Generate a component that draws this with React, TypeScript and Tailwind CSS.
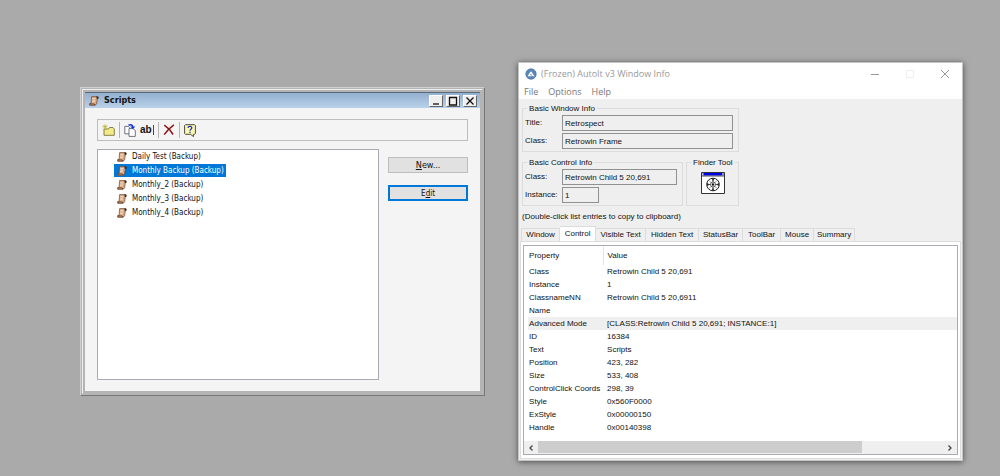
import type { ReactNode } from "react";

const scripts = [
  "Daily Test (Backup)",
  "Monthly Backup (Backup)",
  "Monthly_2 (Backup)",
  "Monthly_3 (Backup)",
  "Monthly_4 (Backup)",
];

const tabs = [
  { label: "Window", width: "w-[39px]" },
  { label: "Control", width: "w-[36px]" },
  { label: "Visible Text", width: "w-[50px]" },
  { label: "Hidden Text", width: "w-[53px]" },
  { label: "StatusBar", width: "w-[44px]" },
  { label: "ToolBar", width: "w-[38px]" },
  { label: "Mouse", width: "w-[33px]" },
  { label: "Summary", width: "w-[41px]" },
];

const properties: [string, string][] = [
  ["Class", "Retrowin Child 5 20,691"],
  ["Instance", "1"],
  ["ClassnameNN", "Retrowin Child 5 20,6911"],
  ["Name", ""],
  ["Advanced Mode", "[CLASS:Retrowin Child 5 20,691; INSTANCE:1]"],
  ["ID", "16384"],
  ["Text", "Scripts"],
  ["Position", "423, 282"],
  ["Size", "533, 408"],
  ["ControlClick Coords", "298, 39"],
  ["Style", "0x560F0000"],
  ["ExStyle", "0x00000150"],
  ["Handle", "0x00140398"],
];

function ScrollIcon() {
  return (
    <svg viewBox="0 0 10 10" className="size-[10px] shrink-0" aria-hidden="true">
      <path d="M2.600.6h6L7.600 7.800 6 9.400H.8L.5 7.800l1.600-.5z" fill="#d9a982" stroke="#6e4630" strokeWidth=".7" />
      <path d="M7.200.5h1.800l.8 1.100-.6 1.500H7.900z" fill="#3f2a24" />
      <path d="M3.400 2.500h3M3.200 4.100h2.900M3 5.700h2.800" stroke="#f9e2c9" strokeWidth=".8" />
      <path d="M.6 8h4.700l.9 1.100" fill="none" stroke="#513222" strokeWidth=".9" />
    </svg>
  );
}

function NewFolderIcon() {
  return (
    <svg viewBox="0 0 13 12" className="h-3 w-[13px]" aria-hidden="true">
      <path d="M2 5h4.500l1-1.500h3.500l1.300 1.500v6.300H2z" fill="#f3ec86" stroke="#77743c" strokeWidth=".9" />
      <path d="M3 .3v4.800M.5 2.700h5M1.200.9l3.600 3.600M4.800.9 1.200 4.500" stroke="#b9b51f" strokeWidth=".7" />
    </svg>
  );
}

function DuplicateIcon() {
  return (
    <svg viewBox="0 0 12 13" className="h-[13px] w-3" aria-hidden="true">
      <path d="M.8 2.400h3.400l1.500 1.400v6H.8z" fill="#fff" stroke="#4b5361" strokeWidth=".8" />
      <path d="M5 4.600h4l2.300 1.800v6H5z" fill="#fff" stroke="#4b5361" strokeWidth=".8" />
      <path d="M4.500 1.300C7 .3 8.600 1 8.800 3" fill="none" stroke="#1733dd" strokeWidth="1.500" />
      <path d="M6.300 2.500h5L8.800 5.200z" fill="#1733dd" />
    </svg>
  );
}

function DeleteIcon() {
  return (
    <svg viewBox="0 0 12 12" className="size-3" aria-hidden="true">
      <path d="M1.300 1.200c3 2 6.500 5.500 8.800 9.300M10.900.9C6.500 4 3.700 7 1.200 10.700" fill="none" stroke="#8e1418" strokeWidth="1.500" />
    </svg>
  );
}

function HelpIcon() {
  return (
    <svg viewBox="0 0 12 13" className="h-[13px] w-3" aria-hidden="true">
      <path d="M1.400.7h9.200l.8.8v8l-.8.8H9.400v2.300L6.600 10.300H1.400l-.8-.8v-8z" fill="#fbf8b4" stroke="#4c4c3c" strokeWidth="1" />
      <path d="M4 3.900C4.100 1.700 8 1.800 7.800 4 7.700 5.200 6 5.200 6 6.700M6 7.700v1.300" fill="none" stroke="#2633b5" strokeWidth="1.300" />
    </svg>
  );
}

function FinderIcon() {
  return (
    <svg viewBox="0 0 24 22" className="h-[22px] w-6" aria-hidden="true">
      <path d="M.5.500h23v21H.500z" fill="#fff" stroke="#333" />
      <path d="M1 1h22v2.500H1z" fill="#0000e8" />
      <path d="M0 4h24" stroke="#222" strokeWidth=".8" />
      <path d="M1.800 1v2.500M22 1v2.500" stroke="#bbb" strokeWidth="1.500" />
      <circle cx="12" cy="12.500" r="6.300" fill="#fff" stroke="#222" strokeWidth="1" />
      <path d="M10.800 6.500 12 8.500l1.200-2M10.800 18.500l1.200-2 1.200 2M6 11.300l2 1.200-2 1.200M18 11.300l-2 1.200 2 1.200" fill="#222" stroke="#222" strokeWidth=".7" />
      <path d="M12 8v9M7.500 12.500h9" stroke="#222" strokeWidth=".8" />
      <path d="m8 8.500 8 8M16 8.500l-8 8" stroke="#777" strokeWidth=".7" />
      <circle cx="12" cy="12.500" r="2.500" fill="#fff" stroke="#333" strokeWidth=".8" />
      <circle cx="12" cy="12.500" r="1.200" fill="#111" />
    </svg>
  );
}

function AutoItIcon() {
  return (
    <svg viewBox="0 0 12 12" className="size-3" aria-hidden="true">
      <circle cx="6" cy="6" r="5.200" fill="#5b87b9" stroke="#426d9e" strokeWidth=".7" />
      <path d="M2.600 8.200 5.300 4q.7-.9 1.400 0l2.700 4.200H7.700L6 5.700 4.900 7.300h1.500l.6.9z" fill="#fff" />
    </svg>
  );
}

function ToolButton({ label, children }: { label: string; children: ReactNode }) {
  return (
    <button type="button" aria-label={label} className="flex h-4 items-center justify-center">
      {children}
    </button>
  );
}

function Divider() {
  return <span className="h-4 w-px bg-[#b4b4b4]" />;
}

function CaptionButton({ label, path }: { label: string; path: string }) {
  return (
    <button
      type="button"
      aria-label={label}
      className="flex h-3 w-[14px] items-center justify-center border border-t-white border-r-[#666] border-b-[#666] border-l-white bg-[#efefef]"
    >
      <svg viewBox="0 0 10 10" className="size-[10px]" aria-hidden="true">
        <path d={path} fill="none" stroke="#111" strokeWidth="1.300" />
      </svg>
    </button>
  );
}

function ScriptsWindow() {
  return (
    <section className="mt-[87px] min-w-0 flex-[405] border border-t-[#d0d0d0] border-r-[#777] border-b-[#777] border-l-[#d0d0d0] bg-[#b4b4b4] font-['DejaVu_Sans_Condensed','DejaVu_Sans',sans-serif] text-[8px] text-[#111]">
      <div className="m-px border border-t-[#eee] border-r-[#b4b4b4] border-b-[#b4b4b4] border-l-[#eee] p-[2px]">
        <header className="flex h-4 items-center gap-[5px] border-t border-[#596a7c] bg-linear-to-b from-[#94b0cf] to-[#b9d1ea] pr-[3px] pl-1">
          <ScrollIcon />
          <h1 className="flex-1 text-[9px] font-bold">Scripts</h1>
          <div className="flex gap-[3px]">
            <CaptionButton label="Minimize" path="M2 8h6" />
            <CaptionButton label="Maximize" path="M1 1.500h8M1.500 1v8h7V1" />
            <CaptionButton label="Close" path="m1.500 1.500 7 7m0-7-7 7" />
          </div>
        </header>
        <div className="bg-[#f4f4f4] px-3 pt-[11px] pb-[11px]">
          <div className="flex h-[22px] items-center gap-1 border border-[#bdbdbd] pl-1">
            <ToolButton label="New folder"><NewFolderIcon /></ToolButton>
            <Divider />
            <ToolButton label="Duplicate"><DuplicateIcon /></ToolButton>
            <ToolButton label="Rename">
              <span className="font-['Liberation_Sans',sans-serif] text-[10px] leading-[10px] font-bold">ab</span>
              <span className="ml-px h-[10px] w-px bg-[#2b35ff]" />
            </ToolButton>
            <Divider />
            <ToolButton label="Delete"><DeleteIcon /></ToolButton>
            <Divider />
            <ToolButton label="Help"><HelpIcon /></ToolButton>
          </div>
          <div className="mt-2 flex items-start gap-[9px]">
            <ul role="listbox" aria-label="Scripts" className="flex min-h-[231px] flex-1 flex-col items-start gap-px border border-[#a8abb4] bg-white pl-4">
              {scripts.map((name, i) => (
                <li
                  key={name}
                  role="option"
                  aria-selected={i === 1}
                  className="flex h-[13px] items-center gap-[5px] pr-[2px] pl-[3px] aria-selected:bg-[#0078d7] aria-selected:text-white"
                >
                  <ScrollIcon />
                  <span className="whitespace-nowrap">{name}</span>
                </li>
              ))}
            </ul>
            <div className="flex w-20 flex-col gap-3 pt-2">
              <button type="button" className="h-4 border border-[#bebebe] bg-[#e1e1e1] text-[9px] leading-[13px]">
                <u>N</u>ew...
              </button>
              <button type="button" className="h-4 border border-[#0078d7] bg-[#e1e1e1] leading-[13px] ring-1 ring-[#0078d7] ring-inset">
                E<u>d</u>it
              </button>
            </div>
          </div>
        </div>
      </div>
    </section>
  );
}

function Field({ id, label, value, short }: { id: string; label: string; value: string; short?: boolean }) {
  return (
    <div className="flex h-4 items-center">
      <label htmlFor={id} className="w-[37px] shrink-0">{label}</label>
      <input
        id={id}
        readOnly
        defaultValue={value}
        className={`h-4 min-w-0 border border-[#919191] bg-[#efefef] px-[2px] ${short ? "w-[37px]" : "flex-1"}`}
      />
    </div>
  );
}

function Group({ title, className, children }: { title: string; className: string; children: ReactNode }) {
  return (
    <fieldset className={`min-w-0 border border-[#dcdcdc] pb-[2px] ${className}`}>
      <legend className="ml-1 px-[2px] leading-[11px] whitespace-nowrap">{title}</legend>
      {children}
    </fieldset>
  );
}

function WindowInfo() {
  return (
    <section className="mt-[62px] min-w-0 flex-[445] border border-[#c4c4c4] bg-[#efefef] font-['Liberation_Sans',sans-serif] text-[8px] text-[#111] shadow-[0_1px_6px_rgba(0,0,0,0.55)]">
      <div className="bg-white font-['Open_Sans',sans-serif] text-[9px]">
        <header className="flex h-[22px] items-center gap-1 pr-3 pl-[6px] text-[#999]">
          <AutoItIcon />
          <h1 className="flex-1">(Frozen) AutoIt v3 Window Info</h1>
          <div className="flex gap-[25px]">
            <button type="button" aria-label="Minimize">
              <svg viewBox="0 0 10 10" className="size-[10px]" aria-hidden="true"><path d="M1 5.500h8" stroke="#999" /></svg>
            </button>
            <button type="button" aria-label="Maximize" disabled>
              <svg viewBox="0 0 10 10" className="size-[10px]" aria-hidden="true"><path d="M1.500 1.500h7v7h-7z" fill="none" stroke="#eee" /></svg>
            </button>
            <button type="button" aria-label="Close">
              <svg viewBox="0 0 10 10" className="size-[10px]" aria-hidden="true"><path d="m1 1 8 8m0-8-8 8" stroke="#999" /></svg>
            </button>
          </div>
        </header>
        <nav className="flex h-[14px] items-center gap-[10px] pl-[5px] text-[#777]">
          <button type="button">File</button>
          <button type="button">Options</button>
          <button type="button">Help</button>
        </nav>
      </div>
      <div className="px-px pt-1 pb-px">
        <div className="flex w-[219px] flex-col gap-[5px] pl-[2px]">
          <Group title="Basic Window Info" className="">
            <div className="flex flex-col gap-[2px] pt-px pr-[5px] pl-[2px]">
              <Field id="win-title" label="Title:" value="Retrospect" />
              <Field id="win-class" label="Class:" value="Retrowin Frame" />
            </div>
          </Group>
          <div className="flex gap-[3px]">
            <Group title="Basic Control Info" className="flex-1">
              <div className="flex flex-col gap-[2px] pt-px pr-[5px] pl-[2px]">
                <Field id="ctl-class" label="Class:" value="Retrowin Child 5 20,691" />
                <Field id="ctl-instance" label="Instance:" value="1" short />
              </div>
            </Group>
            <Group title="Finder Tool" className="w-[53px]">
              <button type="button" aria-label="Finder Tool" className="mx-auto mt-1 block">
                <FinderIcon />
              </button>
            </Group>
          </div>
        </div>
        <p className="mt-[5px] pl-[2px] leading-[11px]">(Double-click list entries to copy to clipboard)</p>
        <div role="tablist" className="mt-1 flex h-[15px] items-end pl-px">
          {tabs.map((tab, i) => (
            <button
              key={tab.label}
              type="button"
              role="tab"
              aria-selected={i === 1}
              className={`h-[13px] border border-b-0 border-l-0 border-[#dcdcdc] leading-[12px] whitespace-nowrap first:border-l aria-selected:h-[15px] aria-selected:bg-white ${tab.width}`}
            >
              {tab.label}
            </button>
          ))}
        </div>
        <div role="tabpanel" className="border border-[#dcdcdc] bg-white px-[2px] py-[3px]">
          <div className="border border-[#a8abb4]">
            <div className="pb-[7px] pl-1">
              <table className="w-full table-fixed border-collapse text-left">
                <thead>
                  <tr className="h-[19px]">
                    <th className="w-[75px] border-r border-[#e5e5e5] p-0 pl-px font-normal">Property</th>
                    <th className="p-0 pl-1 font-normal">Value</th>
                  </tr>
                </thead>
                <tbody>
                  {properties.map(([name, value]) => (
                    <tr key={name} className={name === "Advanced Mode" ? "h-[13px] bg-[#efefef]" : "h-[13px]"}>
                      <td className="p-0 pl-px leading-[13px] whitespace-nowrap">{name}</td>
                      <td className="p-0 pl-1 leading-[13px] whitespace-nowrap">{value}</td>
                    </tr>
                  ))}
                </tbody>
              </table>
            </div>
            <div className="flex h-[13px] bg-[#efefef]">
              <button type="button" aria-label="Scroll left" className="flex w-[14px] items-center justify-center">
                <svg viewBox="0 0 6 8" className="h-2 w-[6px]" aria-hidden="true"><path d="M4.500 1.500 2 4l2.500 2.500" fill="none" stroke="#444" strokeWidth="1.300" /></svg>
              </button>
              <div className="flex-1"><div className="h-3 w-4/5 bg-[#cdcdcd]" /></div>
              <button type="button" aria-label="Scroll right" className="flex w-[14px] items-center justify-center">
                <svg viewBox="0 0 6 8" className="h-2 w-[6px]" aria-hidden="true"><path d="M1.500 1.500 4 4 1.500 6.500" fill="none" stroke="#444" strokeWidth="1.300" /></svg>
              </button>
            </div>
          </div>
        </div>
      </div>
    </section>
  );
}

export default function App() {
  return (
    <main className="flex min-h-screen items-start gap-[33px] bg-[#aaaaaa] pr-[37px] pb-[15px] pl-20">
      <ScriptsWindow />
      <WindowInfo />
    </main>
  );
}
